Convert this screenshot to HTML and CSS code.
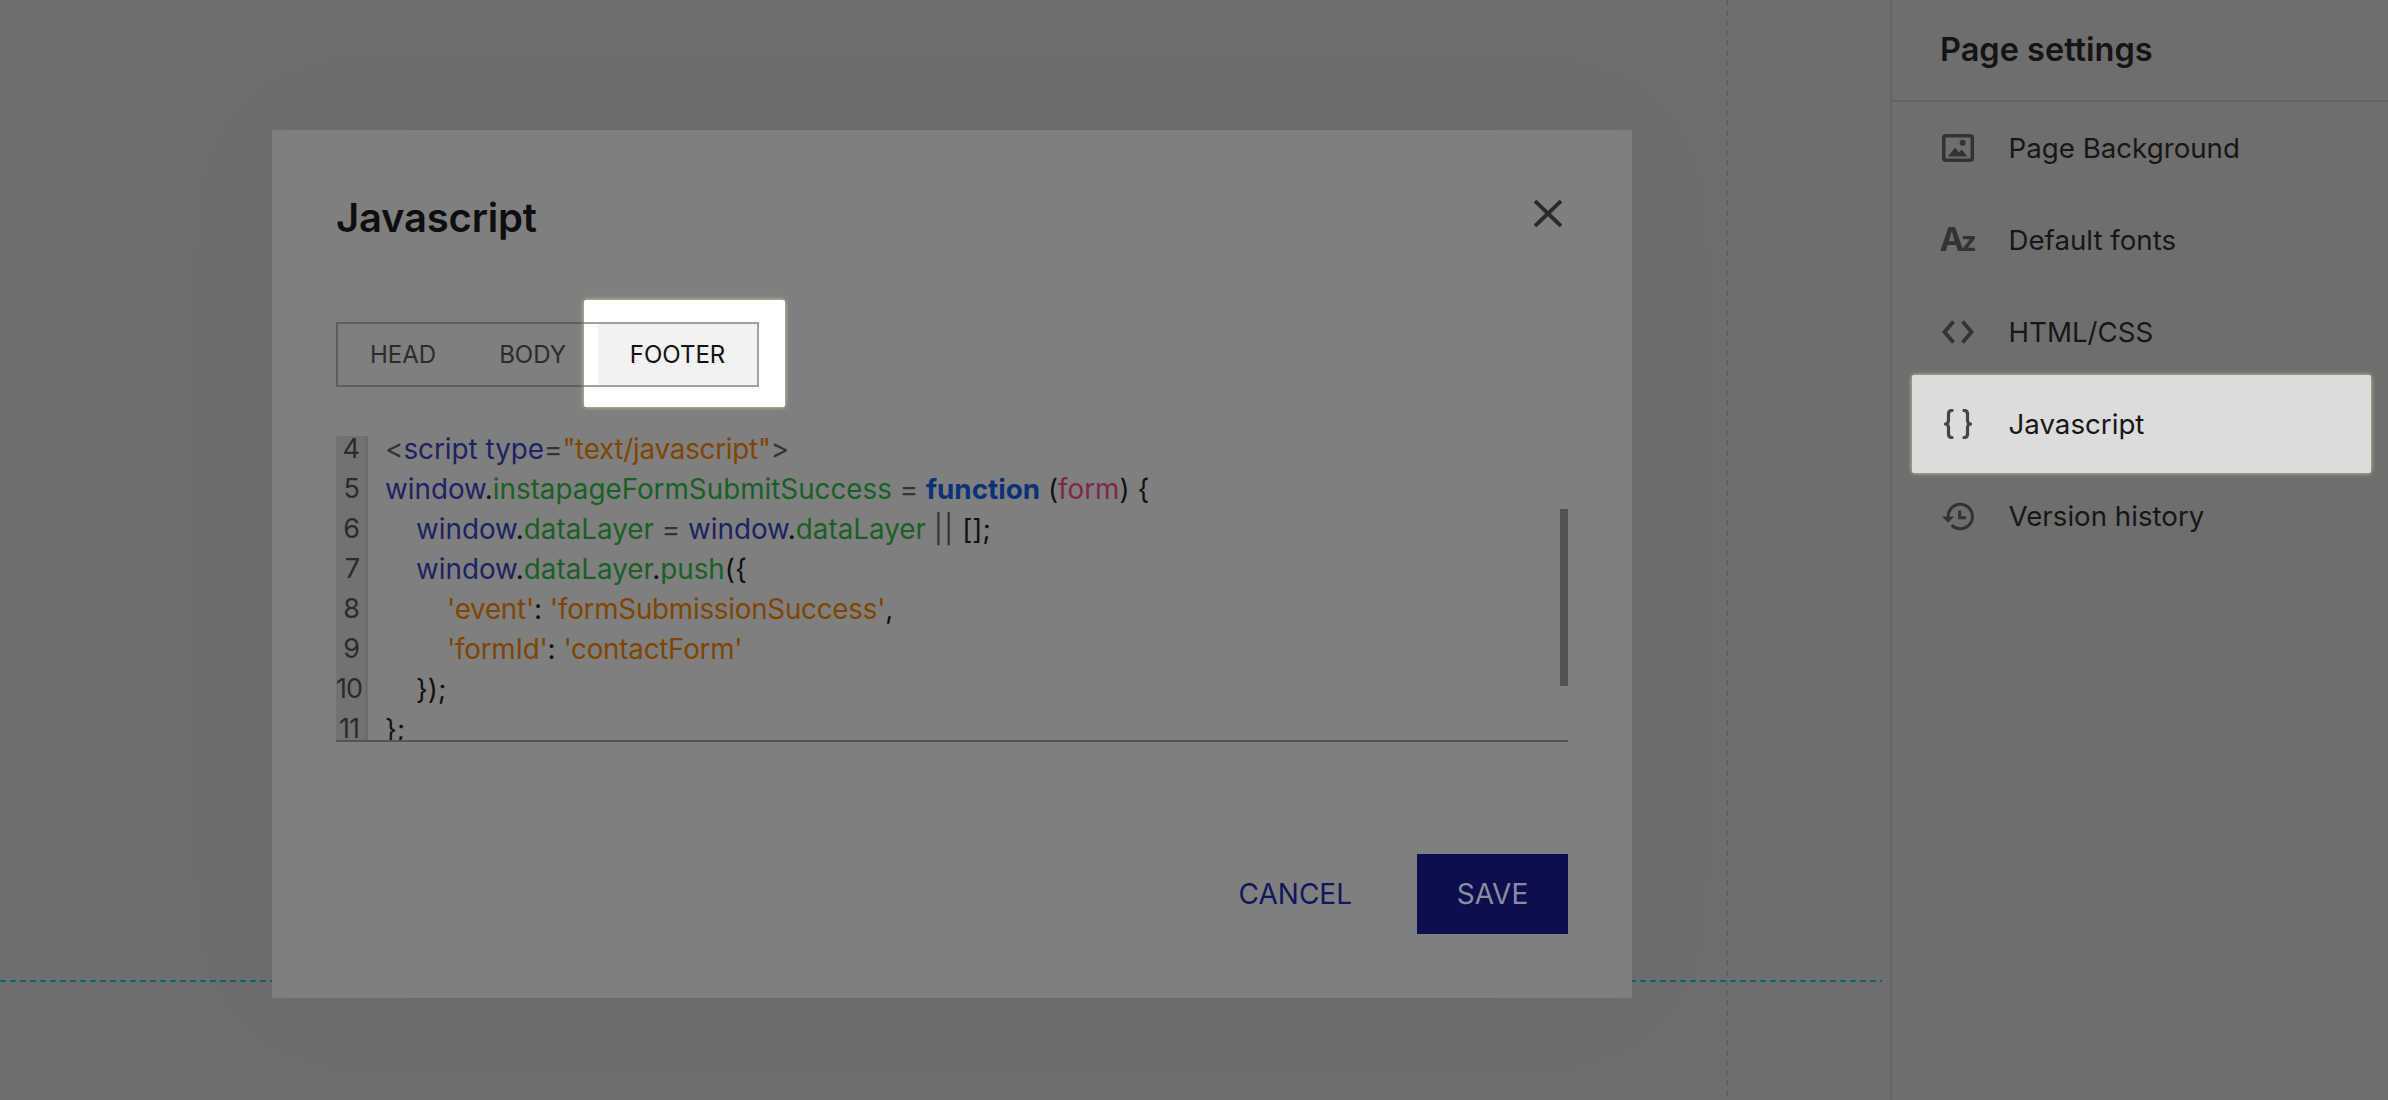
FILE: index.html
```html
<!DOCTYPE html>
<html lang="en">
<head>
  <meta charset="UTF-8">
  <title>Page settings - Javascript</title>
  <link rel="stylesheet" href="styles.css">
</head>
<body>
  <main class="canvas">
    <div class="guide-h"></div>
    <div class="guide-v"></div>
  </main>

  <aside class="sidebar">
    <div class="sidebar-header">Page settings</div>
    <nav class="sidebar-nav">
      <div class="nav-item">
        <span class="nav-icon">
          <svg width="32" height="28" viewBox="0 0 32 28">
            <rect x="1.75" y="1.75" width="28.5" height="24.5" rx="2" fill="none" stroke="currentColor" stroke-width="3.5"></rect>
            <circle cx="20.7" cy="8.7" r="3" fill="currentColor"></circle>
            <path d="M6 22.5L13 13.5L17 18.5L19.5 15.5L25.5 22.5Z" fill="currentColor"></path>
          </svg>
        </span>
        <span>Page Background</span>
      </div>
      <div class="nav-item">
        <span class="nav-icon az-icon"><span class="az-a">A</span><span class="az-z">z</span></span>
        <span>Default fonts</span>
      </div>
      <div class="nav-item">
        <span class="nav-icon">
          <svg width="32" height="24" viewBox="0 0 32 24" fill="none" stroke="currentColor" stroke-width="3.8" stroke-linejoin="miter">
            <path d="M11.5 1.5L2.5 12L11.5 22.5"></path>
            <path d="M20.5 1.5L29.5 12L20.5 22.5"></path>
          </svg>
        </span>
        <span>HTML/CSS</span>
      </div>
      <div class="nav-item active">
        <span class="nav-icon">
          <svg width="28" height="30" viewBox="0 0 28 30" fill="none" stroke="currentColor" stroke-width="3.2" stroke-linecap="round" stroke-linejoin="round">
            <path d="M8 1.5C5 1.5 4.5 3 4.5 5V11C4.5 13.5 3.5 15 1.5 15C3.5 15 4.5 16.5 4.5 19V25C4.5 27 5 28.5 8 28.5"></path>
            <path d="M20 1.5C23 1.5 23.5 3 23.5 5V11C23.5 13.5 24.5 15 26.5 15C24.5 15 23.5 16.5 23.5 19V25C23.5 27 23 28.5 20 28.5"></path>
          </svg>
        </span>
        <span>Javascript</span>
      </div>
      <div class="nav-item">
        <span class="nav-icon">
          <svg width="32" height="29" viewBox="1 2.5 21 19">
            <path d="M13 3a9 9 0 0 0-9 9H1l3.89 3.89.07.14L9 12H6c0-3.87 3.13-7 7-7s7 3.13 7 7-3.13 7-7 7c-1.93 0-3.68-.79-4.94-2.06l-1.42 1.42A8.954 8.954 0 0 0 13 21a9 9 0 0 0 0-18z" fill="currentColor"></path>
            <path d="M12.6 8v4.8h4.2" fill="none" stroke="currentColor" stroke-width="2"></path>
          </svg>
        </span>
        <span>Version history</span>
      </div>
    </nav>
  </aside>

  <section class="modal">
    <h2 class="modal-title">Javascript</h2>
    <button class="modal-close">
      <svg width="28" height="27" viewBox="0 0 28 27" fill="none" stroke="currentColor" stroke-width="3.8">
        <path d="M1 1L27 26"></path>
        <path d="M27 1L1 26"></path>
      </svg>
    </button>

    <div class="tabs">
      <div class="tab">HEAD</div>
      <div class="tab">BODY</div>
      <div class="tab-spot"><div class="tab-spot-frame"></div></div>
      <div class="tab tab-active">FOOTER</div>
    </div>

    <div class="code">
      <div class="code-lines">
        <div class="line"><span class="num">4</span><span class="src"><span class="p">&lt;</span><span class="t">script type</span><span class="p">=</span><span class="s">"text/javascript"</span><span class="p">&gt;</span></span></div>
        <div class="line"><span class="num">5</span><span class="src"><span class="t">window</span><span class="k">.</span><span class="g">instapageFormSubmitSuccess</span> <span class="p">=</span> <span class="b">function</span> <span class="k">(</span><span class="v">form</span><span class="k">) {</span></span></div>
        <div class="line"><span class="num">6</span><span class="src in-1"><span class="t">window</span><span class="k">.</span><span class="g">dataLayer</span> <span class="p">=</span> <span class="t">window</span><span class="k">.</span><span class="g">dataLayer</span> <span class="p or">||</span> <span class="k">[];</span></span></div>
        <div class="line"><span class="num">7</span><span class="src in-1"><span class="t">window</span><span class="k">.</span><span class="g">dataLayer</span><span class="k">.</span><span class="g">push</span><span class="k">({</span></span></div>
        <div class="line"><span class="num">8</span><span class="src in-2"><span class="s">'event'</span><span class="k">:</span> <span class="s">'formSubmissionSuccess'</span><span class="k">,</span></span></div>
        <div class="line"><span class="num">9</span><span class="src in-2"><span class="s">'formId'</span><span class="k">:</span> <span class="s">'contactForm'</span></span></div>
        <div class="line"><span class="num">10</span><span class="src in-1"><span class="k">});</span></span></div>
        <div class="line"><span class="num">11</span><span class="src"><span class="k">};</span></span></div>
      </div>
      <div class="code-scroll"></div>
    </div>

    <div class="modal-footer">
      <button class="btn-cancel">CANCEL</button>
      <button class="btn-save">SAVE</button>
    </div>
  </section>
</body>
</html>
```

FILE: styles.css
```css
* {
  box-sizing: border-box;
}

html, body {
  height: 100%;
}

body {
  margin: 0;
  display: flex;
  height: 1100px;
  overflow: hidden;
  position: relative;
  background-color: #6e6e6e;
  font-family: Inter, "Liberation Sans", sans-serif;
  color: #151515;
}

.canvas {
  flex: 1;
  position: relative;
}

.guide-h {
  position: absolute;
  left: 0;
  top: 980px;
  width: 1882px;
  height: 2px;
  background: repeating-linear-gradient(to right, #10626f 0, #10626f 6px, transparent 6px, transparent 10px);
}

.guide-v {
  position: absolute;
  left: 1726px;
  top: 0;
  width: 2px;
  height: 100%;
  background: repeating-linear-gradient(to bottom, #626262 0, #626262 6px, transparent 6px, transparent 10px);
}

.sidebar {
  width: 498px;
  border-left: 2px solid #646464;
}

.sidebar-header {
  height: 102px;
  padding: 0 0 2px 48px;
  display: flex;
  align-items: center;
  border-bottom: 2px solid #646464;
  font-size: 32.5px;
  font-weight: 600;
  color: #141414;
}

.nav-item {
  height: 92px;
  margin: 0 17px 0 20px;
  padding-left: 30px;
  display: flex;
  align-items: center;
  font-size: 27.7px;
  color: #171717;
}

.nav-item.active {
  height: 98px;
  margin-top: -3px;
  margin-bottom: -3px;
  border-radius: 2px;
  background-color: #dcdcdc;
  box-shadow: 0 0 4px rgba(220, 220, 170, 0.9);
}

.nav-icon {
  width: 32px;
  margin-right: 34.5px;
  display: flex;
  justify-content: center;
  color: #333;
}

.active .nav-icon {
  color: #454545;
}

.az-icon {
  align-items: baseline;
  font-weight: 700;
  line-height: 32px;
}

.az-a {
  font-size: 33px;
  letter-spacing: -3px;
}

.az-z {
  font-size: 27px;
}

.modal {
  position: absolute;
  left: 272px;
  top: 130px;
  width: 1360px;
  height: 868px;
  padding: 64px;
  background-color: #7f7f7f;
  box-shadow: 0 0 120px rgba(0, 0, 0, 0.04);
}

.modal-title {
  margin: 0 0 80px;
  font-size: 40px;
  line-height: 48px;
  font-weight: 600;
  letter-spacing: -0.2px;
  color: #0e0e0e;
}

.modal-close {
  position: absolute;
  right: 70px;
  top: 70px;
  padding: 0;
  border: none;
  background: transparent;
  color: #2a2a2a;
  display: flex;
}

.tabs {
  position: relative;
  display: flex;
  width: 423px;
  height: 65px;
  border: 2px solid #5e5e5e;
}

.tab {
  padding: 0 31px 0 32px;
  display: flex;
  align-items: center;
  font-size: 24px;
  color: #2c2c2c;
}

.tab-active {
  position: absolute;
  left: 260px;
  top: 0;
  height: 61px;
  width: 159px;
  justify-content: center;
  padding: 0;
  background-color: #f2f2f2;
  color: #111;
}

.tab-spot {
  position: absolute;
  left: 246px;
  top: -24px;
  width: 201px;
  height: 107px;
  border-radius: 2px;
  background-color: #fff;
  box-shadow: 0 0 4px rgba(220, 220, 170, 0.9);
}

.tab-spot-frame {
  position: absolute;
  left: 0;
  top: 22px;
  width: 175px;
  height: 65px;
  border: 2px solid #a0a0a0;
  border-left: none;
}

.code {
  position: relative;
  height: 306px;
  margin-top: 49px;
  overflow: hidden;
  border-bottom: 2px solid #555;
  font-size: 27.8px;
}

.code-lines {
  margin-top: -7px;
}

.line {
  display: flex;
  height: 40px;
  line-height: 40px;
  white-space: pre;
}

.num {
  width: 32px;
  padding-right: 6px;
  flex-shrink: 0;
  text-align: right;
  font-size: 27px;
  letter-spacing: -1px;
  background-color: #727272;
  border-right: 3px solid #6c6c6c;
  color: #2b2b2b;
}

.src {
  padding-left: 17px;
  color: #111;
}

.in-1 {
  padding-left: 48px;
}

.in-2 {
  padding-left: 79px;
}

.p { color: #333; }
.or { letter-spacing: 1px; }
.t { color: #1d2264; }
.s { color: #804600; letter-spacing: -0.25px; }
.g { color: #1a5f26; }
.b { color: #0b3278; font-weight: 700; }
.v { color: #802848; }
.k { color: #111; }

.code-scroll {
  position: absolute;
  right: 0;
  top: 73px;
  width: 8px;
  height: 177px;
  background-color: #525250;
}

.modal-footer {
  margin-top: 112px;
  display: flex;
  justify-content: flex-end;
  align-items: center;
}

.modal-footer button {
  border: none;
  font-family: inherit;
  font-size: 28px;
}

.btn-cancel {
  margin-right: 65px;
  padding: 0;
  background: transparent;
  color: #12165e;
}

.btn-save {
  width: 151px;
  height: 80px;
  background-color: #0c0e4e;
  color: #8c8ca0;
}
```
